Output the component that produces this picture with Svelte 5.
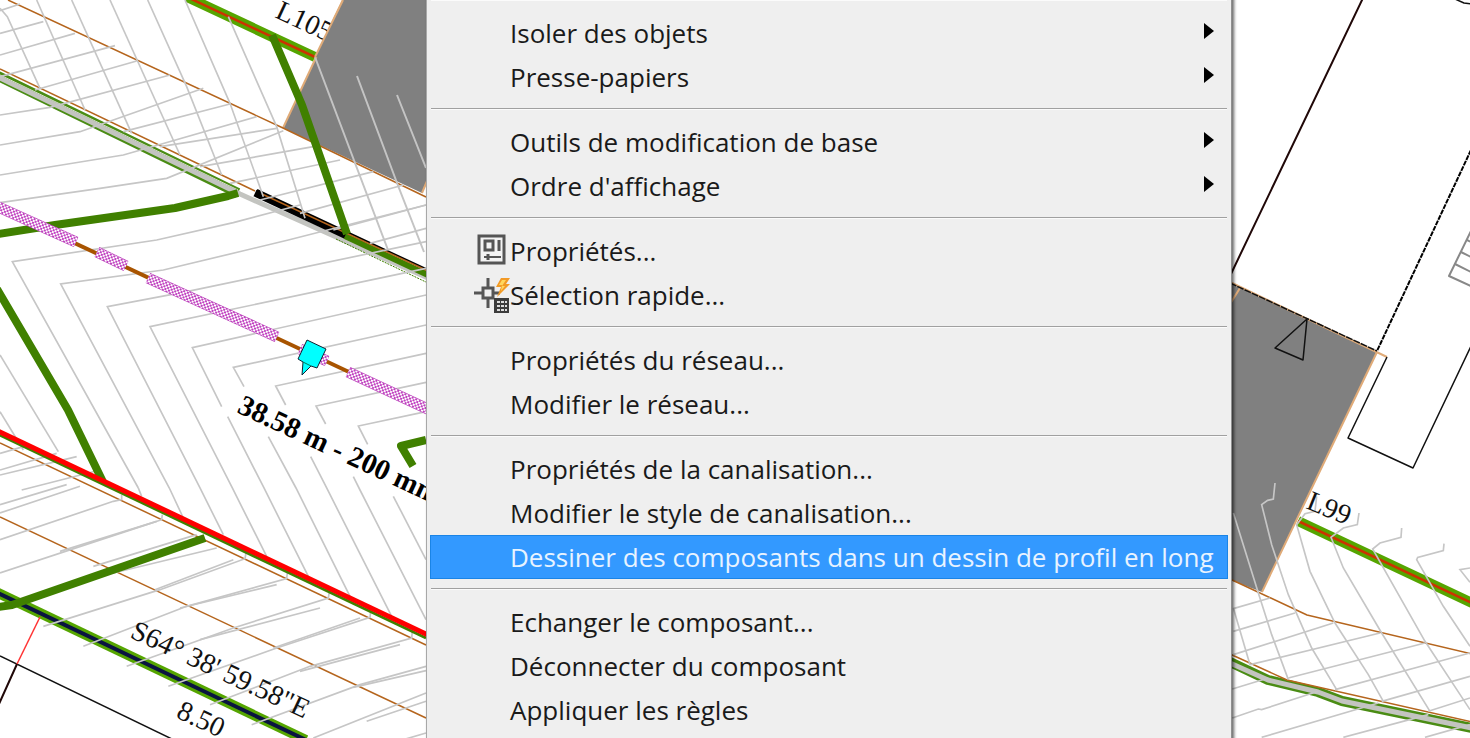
<script>
	const groups = [
		[
			{ label: 'Isoler des objets', submenu: true },
			{ label: 'Presse-papiers', submenu: true }
		],
		[
			{ label: 'Outils de modification de base', submenu: true },
			{ label: "Ordre d'affichage", submenu: true }
		],
		[
			{ label: 'Propriétés...', icon: 'properties' },
			{ label: 'Sélection rapide...', icon: 'select' }
		],
		[{ label: 'Propriétés du réseau...' }, { label: 'Modifier le réseau...' }],
		[
			{ label: 'Propriétés de la canalisation...' },
			{ label: 'Modifier le style de canalisation...' },
			{ label: 'Dessiner des composants dans un dessin de profil en long' }
		],
		[
			{ label: 'Echanger le composant...' },
			{ label: 'Déconnecter du composant' },
			{ label: 'Appliquer les règles' }
		]
	];

	let active = $state('Dessiner des composants dans un dessin de profil en long');

	// contour lines, drawn at three units to the pixel, one set per map tile
	const tiles = [
		{
			x: 0,
			y: 0,
			lines: [
				'0,25 22,50 120,265',
				'110,0 255,330',
				'215,0 395,400',
				'330,0 540,465',
				'443,0 560,260 665,525',
				'555,0 690,310 790,590',
				'685,50 830,380 915,655',
				'0,32 60,12',
				'0,100 130,65',
				'0,165 225,100',
				'0,230 345,137',
				'105,270 410,183',
				'0,345 150,322 510,225',
				'0,435 240,395 610,265',
				'370,395 690,312',
				'0,525 370,465 770,350',
				'0,608 300,565 500,535 850,392',
				'480,440 830,385',
				'600,500 940,440',
				'690,550 1020,480',
				'780,600 1120,515',
				'900,640 1210,555',
				'1000,690 1278,615',
				'1110,730 1278,685'
			]
		},
		{
			x: 0,
			y: 240,
			lines: [
				'0,345 175,635',
				'0,515 70,630',
				'0,640 70,620',
				'0,690 170,640',
				'0,705 230,650',
				'65,750 300,690',
				'415,744 37,65 470,0 700,-52 900,-105',
				'550,834 508,744 182,132 490,90 865,0 1278,-105',
				'670,884 600,744 322,200 560,155 1278,5',
				'800,949 697,744 450,260 1278,85',
				'665,500 577,323 1278,165',
				'925,1009 792,744 683,530',
				'732,440 700,382 1278,255',
				'1050,1069 888,744 805,590',
				'857,495 827,438 1278,340',
				'1175,1129 980,744 932,650',
				'977,552 948,498 1278,427',
				'1278,1139 1080,750 1060,710',
				'1103,613 1075,558 1278,515'
			]
		},
		{
			x: 0,
			y: 488,
			lines: [
				'415,0 425,25',
				'0,50 200,-10',
				'0,75 240,-5',
				'0,155 340,40 365,35 365,20',
				'0,255 440,110 485,95 487,80',
				'180,190 470,100',
				'280,235 590,140',
				'340,255 650,180',
				'130,415 480,305 735,212 738,195',
				'465,305 700,215',
				'250,475 560,355 860,272 862,255',
				'540,360 830,290',
				'380,535 700,420 985,330 988,312',
				'600,455 960,360',
				'505,595 830,480 1110,388 1112,370',
				'820,480 1080,390',
				'630,650 930,535 1235,450 1237,430',
				'900,550 1200,470',
				'755,710 1080,590 1278,535',
				'1060,598 1278,548',
				'940,750 1278,615',
				'1100,700 1278,640',
				'1210,755 1278,735',
				'1180,25 1278,215'
			]
		},
		{
			x: 1225,
			y: 368,
			lines: [
				'150,345 145,393 128,397 110,410 140,530 190,680 260,840 335,965',
				'25,435 100,675 140,800 190,935',
				'25,720 75,890',
				'275,385 270,430 240,437 215,470 255,610 330,765 430,920 475,1000',
				'402,435 397,470 355,480 318,508 355,600 470,795 615,1030',
				'530,480 528,508 465,525 443,543 600,820 735,1025',
				'657,527 655,548 578,568 575,575 655,715 735,835',
				'735,600 705,605 735,643',
				'25,722 135,690',
				'25,790 210,735',
				'25,860 325,765',
				'75,890 465,795',
				'190,930 600,825',
				'330,965 735,855',
				'470,1000 735,925',
				'610,1030 735,990',
				'22,963 130,930',
				'22,1050 100,1023 110,1025 280,970',
				'110,1108 460,1005',
				'355,1108 610,1040',
				'600,1108 735,1070'
			]
		}
	];

	// hatched sections of the selected pipe
	const sections = [
		'M-4 206 76 242',
		'M97 252 126 266',
		'M148 278 277 337',
		'M300 349 327 361',
		'M348 372 432 411'
	];
</script>

<main class="workspace">
	<svg class="plan" viewBox="0 0 1470 738" preserveAspectRatio="xMinYMin slice">
		<defs>
			<pattern
				id="hatch"
				width="4"
				height="4"
				patternUnits="userSpaceOnUse"
				patternTransform="rotate(25)"
			>
				<rect width="4" height="4" fill="#fff" />
				<path d="M0 0 4 4M4 0 0 4" stroke="#b010b0" stroke-width="0.8" />
			</pattern>
		</defs>

		<g fill="#808080">
			<path d="M343 0 283 128 422 193 426 183V0Z" />
			<path d="M1230 283 1377 352 1262 592 1230 580Z" />
		</g>

		<g class="line peach">
			<path d="M343 0 283 128M422 193 427 181" />
			<path d="M1377 352 1262 592M1230 282 1387 357M1240 288 1230 304" />
		</g>

		<path class="line lime" d="M187 -3 315 57M1298 521 1472 603" />
		<path class="line rust" d="M187 -3 315 57M1298 521 1472 603" />
		<path class="line lime" d="M-4 592 306 740" />
		<path class="line navy" d="M-4 592 306 740" />

		<!-- road edges -->
		<path class="line green-edge" d="M-2 76 238 193M1230 662 1268 680 1318 692 1342 701 1472 728" />
		<path class="line gap" d="M-2 74 238 190" />
		<path class="line pavement" d="M-2 77 240 194 428 278M1230 663 1268 680 1318 692 1342 701 1472 728" />
		<path class="line fine-green" d="M336 239 428 283" />
		<path class="line black-edge" d="M255 193 347 236" />
		<path class="line green-thin" d="M345 236 428 275" />
		<path class="line thin-black" d="M257 190 428 270" />
		<path class="line brown" d="M262 194 428 271" />

		<g class="line brown">
			<path d="M8 0 283 128 426 197" />
			<path d="M0 69 255 191" />
			<path d="M0 443 426 645" />
			<path d="M0 517 426 718" />
			<path d="M1230 579 1307 615 1472 654" />
			<path d="M1230 654 1287 680 1472 722" />
		</g>

		{#each tiles as tile}
			<g class="contours" transform="translate({tile.x} {tile.y}) scale(0.33333)">
				{#each tile.lines as points}
					<polyline {points} />
				{/each}
			</g>
		{/each}
		<path class="line contour-light" d="M315 57 355 163 388 250M357 76 397 183 424 252M397 95 426 168" />

		<g class="line green">
			<path d="M-2 234 55 225 175 208 228 196 238 193" />
			<path d="M272 35 302 105 347 234" />
			<path d="M-3 289 68 410 103 482" />
			<path d="M426 440 401 446 413 466" />
			<path d="M-2 607 12 605 205 538" />
		</g>
		<path class="line green-under" d="M0 435 426 638" />
		<path class="line red" d="M-2 431 428 635" />

		<path class="line pipe" d="M0 208 432 411" />
		{#each sections as d}
			<path class="line outline" {d} />
			<path class="line" {d} stroke="url(#hatch)" stroke-width="10" />
		{/each}
		<path d="M307 340 326 349 317 368 311 366 302 375 303 362 298 359Z" class="grip" />
		<path d="M303 362 311 366" stroke="#075" />

		<g class="line black">
			<path d="M0 656 174 740" />
			<path d="M1307 319 1275 348 1303 360Z" />
			<path d="M1387 357 1348 438 1413 468 1472 344" />
			<path d="M1455 -1 1464 3 1472 4" />
			<path d="M1230 283 1377 351" stroke-dasharray="7 1" />
		</g>
		<path class="line dark" d="M1363 -2 1230 276M17 664 -1 704" />
		<path class="line wavy" d="M1471 150 1377 351" />
		<path class="line thin-red" d="M40 617 17 664" />
		<path class="line stairs" d="M1471 231 1449 276 1471 286M1455 264 1471 272M1461 252 1471 257M1467 240 1471 242" />

		<g class="notes">
			<text transform="translate(274 17) rotate(25)">L105</text>
			<text transform="translate(129 637) rotate(25)">S64° 38' 59.58"E</text>
			<text transform="translate(175 717) rotate(25)">8.50</text>
			<text transform="translate(1305 508) rotate(22)">L99</text>
			<text class="selected" transform="translate(236 412) rotate(25)">38.58 m - 200 mm</text>
		</g>
		<path d="M343 0 315 57 345 60V0Z" fill="#808080" />
		<path class="line peach" d="M343 0 315 57" />
	</svg>

	<div class="menu" role="menu">
		{#each groups as group}
			<div class="separator" role="separator"></div>
			{#each group as item}
				<button
					class="item"
					class:active={item.label === active}
					role="menuitem"
					onmouseenter={() => (active = item.label)}
				>
					<span class="icon">
						{#if item.icon === 'properties'}
							<svg width="36" height="36" viewBox="0 0 36 36" fill="none" stroke="#555">
								<rect x="5" y="3" width="25" height="27" fill="#f3f3f3" stroke-width="3" />
								<path d="M11 8h8v9h-8zM25 7v11" stroke-width="3" />
								<path d="M10 24h17" stroke-width="2" />
								<path d="M14 21v6" stroke-width="3" />
							</svg>
						{:else if item.icon === 'select'}
							<svg width="36" height="36" viewBox="0 0 36 36" fill="none">
								<path
									d="M0 16h9M14 1v10M14 21v10M20 16h6M9 11h10v10H9z"
									stroke="#555"
									stroke-width="3"
								/>
								<path d="M27 1h9l-4 6h4L23 20l4-10h-5z" fill="#f29a26" />
								<path d="M28 3h4l-4 6h3l-4 5 1-6h-3z" fill="#ffd75e" />
								<path d="M20 21h15v15H20z" fill="#3c3c3c" />
								<path
									d="M23 25h3M27 25h3M31 25h2M23 29h3M27 29h3M31 29h2M23 33h3M27 33h3M31 33h2"
									stroke="#ddd"
									stroke-width="2"
								/>
							</svg>
						{/if}
					</span>
					<span class="label">{item.label}</span>
					{#if item.submenu}
						<svg class="arrow" width="10" height="16" viewBox="0 0 10 16">
							<path d="M0 0 10 8 0 16Z" />
						</svg>
					{/if}
				</button>
			{/each}
		{/each}
	</div>
</main>

<style>
	:global(body) {
		margin: 0;
		background: #fff;
	}

	.workspace {
		position: relative;
		height: 100vh;
		overflow: hidden;
		background: #fff;
	}

	.plan {
		position: absolute;
		inset: 0;
		width: 100%;
		height: 100%;
	}

	.line {
		fill: none;
		stroke-linejoin: round;
	}

	.contours {
		fill: none;
		stroke: #c6c6c6;
		stroke-width: 5;
	}

	.contour-light {
		stroke: #c4c4c4;
		stroke-width: 2;
	}

	.peach {
		stroke: #e0ab78;
		stroke-width: 2;
	}

	.brown {
		stroke: #b5651d;
		stroke-width: 1.5;
	}

	.lime {
		stroke: #55a500;
		stroke-width: 10;
	}

	.rust {
		stroke: #cc3300;
		stroke-width: 2.5;
	}

	.navy {
		stroke: #0a1440;
		stroke-width: 4;
	}

	.green {
		stroke: #408000;
		stroke-width: 8;
	}

	.green-edge {
		stroke: #4a8c14;
		stroke-width: 10;
	}

	.gap {
		stroke: #d9e6cc;
		stroke-width: 1;
	}

	.pavement {
		stroke: #c3c4c0;
		stroke-width: 5;
	}

	.fine-green {
		stroke: #408000;
		stroke-width: 1;
		stroke-dasharray: 2 1;
	}

	.green-thin {
		stroke: #408000;
		stroke-width: 6;
	}

	.green-under {
		stroke: #408000;
		stroke-width: 3;
	}

	.black-edge {
		stroke: #000;
		stroke-width: 7;
	}

	.thin-black {
		stroke: #000;
		stroke-width: 2;
	}

	.red {
		stroke: #f00;
		stroke-width: 5;
	}

	.pipe {
		stroke: #a85400;
		stroke-width: 4;
	}

	.outline {
		stroke: #b83cb8;
		stroke-width: 11;
	}

	.grip {
		fill: #0ff;
		stroke: #123;
		stroke-width: 1;
	}

	.black {
		stroke: #111;
		stroke-width: 1.5;
	}

	.dark {
		stroke: #200808;
		stroke-width: 2;
	}

	.wavy {
		stroke: #000;
		stroke-width: 2;
		stroke-dasharray: 5 1;
	}

	.thin-red {
		stroke: #f33;
		stroke-width: 1.5;
	}

	.stairs {
		stroke: #888;
		stroke-width: 2;
	}

	.notes {
		font-family: 'Liberation Serif', serif;
		font-size: 28px;
		fill: #111;
	}

	.selected {
		font-size: 29px;
		font-weight: bold;
		fill: #000;
	}

	.menu {
		position: absolute;
		top: -11px;
		bottom: -11px;
		left: 426px;
		width: max-content;
		box-sizing: border-box;
		padding: 0 3px;
		background: #efefef;
		border-left: 1px solid #a8a8a8;
		border-right: 1px solid #909090;
		box-shadow: 2px 0 3px rgba(0, 0, 0, 0.6);
	}

	.separator {
		height: 1px;
		margin: 9px 1px 10px;
		background: #a0a0a0;
		border-bottom: 1px solid #fbfbfb;
	}

	.separator:first-child {
		margin-top: 10px;
	}

	.item {
		display: flex;
		align-items: center;
		box-sizing: border-box;
		width: 100%;
		height: 44px;
		padding: 0 13px 0 0;
		border: 1px solid transparent;
		background: none;
		color: #1a1a1a;
		font: 26px/36px 'Open Sans', sans-serif;
		text-align: left;
		white-space: nowrap;
	}

	.item.active {
		background: #3399ff;
		border-color: #1a84e6;
		color: #e8f3ff;
	}

	.icon {
		display: flex;
		justify-content: flex-end;
		width: 79px;
	}

	.arrow {
		margin: 0 0 5px auto;
	}
</style>
